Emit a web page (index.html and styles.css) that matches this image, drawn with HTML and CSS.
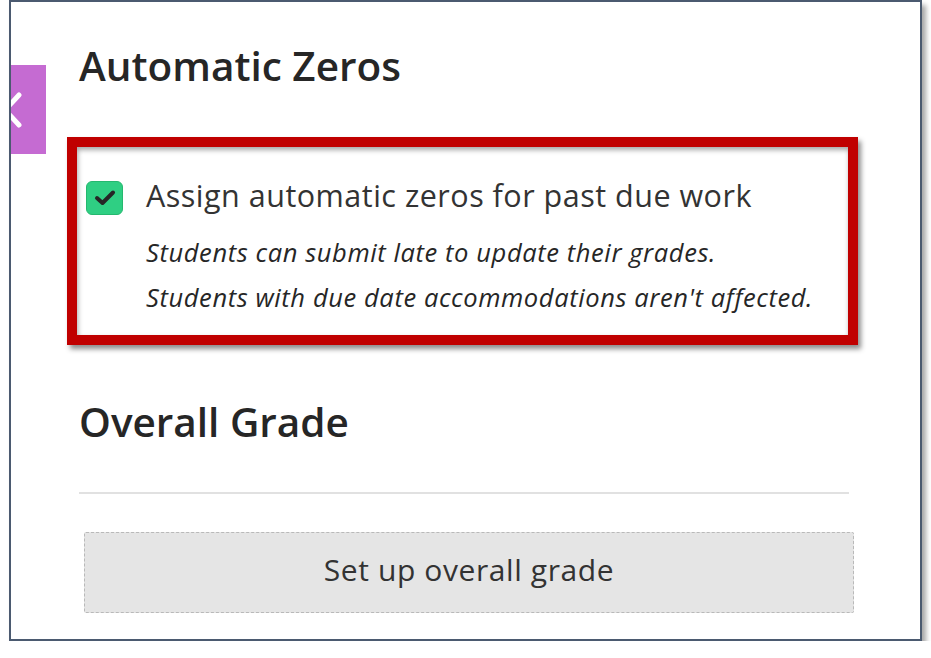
FILE: index.html
```html
<!DOCTYPE html>
<html lang="en">
<head>
<meta charset="utf-8">
<title>Automatic Zeros</title>
<link rel="stylesheet" href="styles.css">
</head>
<body>
<div class="frame">
  <div class="drawer-tab">
    <svg class="chev" width="20" height="36" viewBox="0 0 20 36"><path d="M14 3 L0 18 L14 33" fill="none" stroke="#fff" stroke-width="5" stroke-linecap="round" stroke-linejoin="round"/></svg>
  </div>
  <div class="content">
    <h2 class="heading h-auto">Automatic Zeros</h2>
    <div class="callout">
      <div class="option">
        <span class="checkbox">
          <svg width="22" height="18" viewBox="0 0 22 18"><path d="M3 9 L8.5 14 L19 3.5" fill="none" stroke="#262626" stroke-width="4" stroke-linecap="round" stroke-linejoin="round"/></svg>
        </span>
        <div class="option-text">
          <div class="label">Assign automatic zeros for past due work</div>
          <div class="help">Students can submit late to update their grades.</div>
          <div class="help">Students with due date accommodations aren't affected.</div>
        </div>
      </div>
    </div>
    <h2 class="heading h-overall">Overall Grade</h2>
    <hr class="divider">
    <button class="setup">Set up overall grade</button>
  </div>
</div>
</body>
</html>
```
FILE: styles.css
```css
* { box-sizing: border-box; }
html, body { margin: 0; padding: 0; background: #fff; }
body { font-family: "Open Sans", "Liberation Sans", sans-serif; color: #262626; }

.frame {
  position: relative;
  margin-left: 9px;
  width: 913px;
  height: 641px;
  border: 2px solid #4b5a70;
  background: #fff;
  box-shadow: 4px 5px 5px rgba(0,0,0,0.35);
  overflow: hidden;
}

.drawer-tab {
  position: absolute;
  left: 0;
  top: 63px;
  width: 35px;
  height: 89px;
  background: #c56bd2;
}
.chev { position: absolute; left: -6px; top: 27px; }

.content {
  padding-left: 56px;
}

.heading {
  margin: 0;
  font-weight: 600;
  font-size: 40.5px;
  line-height: 50px;
  color: #262626;
}
.h-auto { margin-top: 39px; padding-left: 12px; }
.h-overall { margin-top: 52px; padding-left: 12px; }

.callout {
  margin-top: 46px;
  width: 791px;
  height: 208px;
  border: 10px solid #c00000;
  box-shadow: 3px 4px 5px rgba(0,0,0,0.45), inset 1px 3px 5px rgba(0,0,0,0.35);
  padding: 34px 0 0 9px;
}

.option { display: flex; gap: 23px; }
.checkbox {
  flex: none;
  width: 37px;
  height: 34px;
  border-radius: 6px;
  background: #2fcf83;
  border: 1px solid #25b86f;
  display: flex;
  align-items: center;
  justify-content: center;
}
.option-text { margin-top: -4px; }
.label {
  font-size: 30.5px;
  letter-spacing: 0.5px;
  line-height: 36px;
  color: #333;
}
.help {
  font-style: italic;
  font-size: 25.5px;
  letter-spacing: 0.6px;
  line-height: 45px;
  color: #262626;
}
.label + .help { margin-top: 17px; }
.option-text .help:last-child { margin-top: 0; }

.divider {
  margin: 45px 0 0 12px;
  width: 770px;
  height: 2px;
  border: 0;
  background: #e1e1e1;
}

.setup {
  display: block;
  margin: 38px 0 0 17px;
  width: 770px;
  height: 81px;
  background: #e5e5e5;
  border: 1px dashed #b9b9b9;
  border-radius: 2px;
  font-family: "Open Sans", "Liberation Sans", sans-serif;
  font-size: 30px;
  letter-spacing: 0.6px;
  color: #333;
  padding: 0 0 6px 0;
}
```
